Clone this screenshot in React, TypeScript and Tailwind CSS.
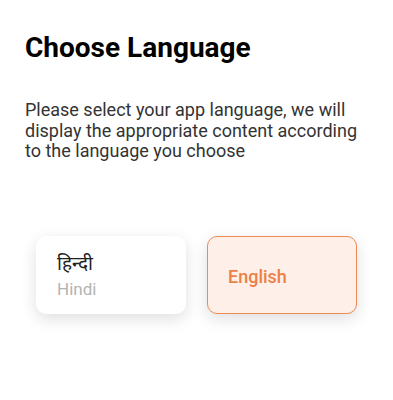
export default function App() {
  return (
    <div className="min-h-[400px] bg-white px-[25px] pt-[30px]" style={{ fontFamily: 'Roboto, "Noto Sans", sans-serif' }}>
      <h1 className="text-[28px] font-bold leading-[36px] text-black">Choose Language</h1>
      <p className="mt-[34px] text-[18px] leading-[20.5px] text-[#333333]">
        Please select your app language, we will display the appropriate content according to the language you choose
      </p>
      <div className="mt-[74px] flex gap-[21px] pl-[11px]">
        <button className="flex h-[78px] w-[150px] flex-col justify-center rounded-[10px] bg-white pl-[21px] text-left shadow-[0_5px_16px_rgba(0,0,0,0.13)]">
          <span className="text-[19px] leading-[24px] text-[#222222]" style={{ fontFamily: '"Noto Sans", sans-serif' }}>हिन्दी</span>
          <span className="mt-[4px] text-[17px] leading-[20px] text-[#b3b3b3]">Hindi</span>
        </button>
        <button className="flex h-[78px] w-[150px] items-center rounded-[10px] border border-[#ef8a54] bg-[#fef0e8] pl-[20px] pt-[3px] text-left shadow-[0_5px_16px_rgba(0,0,0,0.13)]">
          <span className="text-[18px] font-medium text-[#ec7f45]">English</span>
        </button>
      </div>
    </div>
  )
}
